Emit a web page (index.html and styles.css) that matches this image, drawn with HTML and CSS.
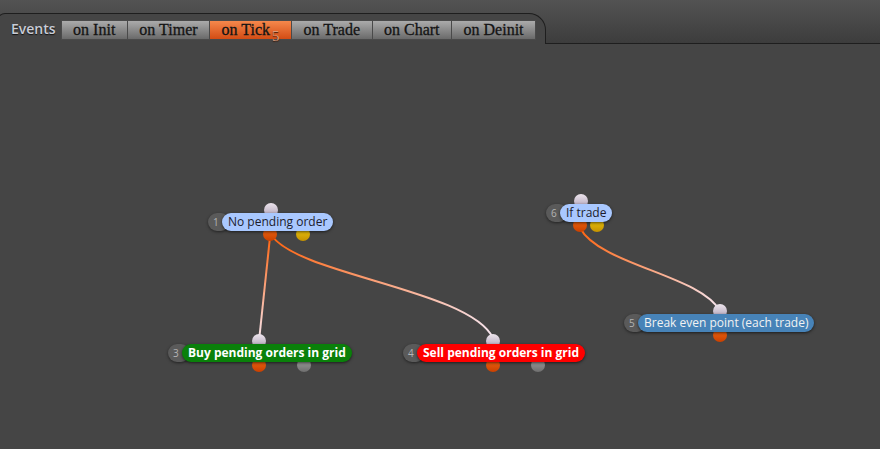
FILE: index.html
```html
<!DOCTYPE html>
<html lang="en">
<head>
    <meta charset="UTF-8">
    <title>Events</title>
    <link rel="stylesheet" href="styles.css">
</head>
<body>

    <div class="header">
        <div class="tabstrip">
            <span class="eventsLabel">Events</span>
            <span class="tab">on Init</span>
            <span class="tab">on Timer</span>
            <span class="tab activeTab">on Tick<sub class="count">5</sub></span>
            <span class="tab">on Trade</span>
            <span class="tab">on Chart</span>
            <span class="tab">on Deinit</span>
        </div>
        <div class="filler"></div>
    </div>

    <div class="canvas">
        <svg class="wires" width="880" height="405">
            <defs>
                <linearGradient id="w1" gradientUnits="userSpaceOnUse" x1="270" y1="193" x2="259" y2="297">
                    <stop offset="0" stop-color="#ff6410"/>
                    <stop offset="1" stop-color="#f6e6f0"/>
                </linearGradient>
                <linearGradient id="w2" gradientUnits="userSpaceOnUse" x1="272" y1="192" x2="493" y2="294">
                    <stop offset="0" stop-color="#ff6410"/>
                    <stop offset="1" stop-color="#f6e6f0"/>
                </linearGradient>
                <linearGradient id="w3" gradientUnits="userSpaceOnUse" x1="580" y1="184" x2="720" y2="267">
                    <stop offset="0" stop-color="#ff6410"/>
                    <stop offset="1" stop-color="#f6e6f0"/>
                </linearGradient>
            </defs>
            <path d="M270 193 L259 297" stroke="url(#w1)" stroke-width="2" fill="none"/>
            <path d="M272 192 C 300 231, 470 246, 493 294" stroke="url(#w2)" stroke-width="2" fill="none"/>
            <path d="M580 184 C 600 221, 700 231, 720 267" stroke="url(#w3)" stroke-width="2" fill="none"/>
        </svg>

        <div class="node" style="left:208px;top:169px">
            <span class="pin pinIn" style="left:56px"></span>
            <span class="pin pinOut" style="left:55px"></span>
            <span class="pin pinYes" style="left:88px"></span>
            <span class="num">1</span>
            <span class="label lightBlue">No pending order</span>
        </div>

        <div class="node" style="left:546px;top:160px">
            <span class="pin pinIn" style="left:28px"></span>
            <span class="pin pinOut" style="left:27px"></span>
            <span class="pin pinYes" style="left:44px"></span>
            <span class="num">6</span>
            <span class="label lightBlue">If trade</span>
        </div>

        <div class="node" style="left:168px;top:300px">
            <span class="pin pinIn" style="left:84px"></span>
            <span class="pin pinOut" style="left:84px"></span>
            <span class="pin pinOff" style="left:129px"></span>
            <span class="num">3</span>
            <span class="label green">Buy pending orders in grid</span>
        </div>

        <div class="node" style="left:403px;top:300px">
            <span class="pin pinIn" style="left:83px"></span>
            <span class="pin pinOut" style="left:83px"></span>
            <span class="pin pinOff" style="left:128px"></span>
            <span class="num">4</span>
            <span class="label red">Sell pending orders in grid</span>
        </div>

        <div class="node" style="left:624px;top:270px">
            <span class="pin pinIn" style="left:89px"></span>
            <span class="pin pinOut" style="left:89px"></span>
            <span class="num">5</span>
            <span class="label steel">Break even point (each trade)</span>
        </div>
    </div>

</body>
</html>
```

FILE: styles.css
```css
body {
    margin: 0;
    width: 880px;
    height: 449px;
    overflow: hidden;
    background-color: #454545;
    font-family: "Open Sans", sans-serif;
}

/* top bar with the event tabs */
.header {
    display: flex;
    height: 44px;
    background: linear-gradient(#535353, #3c3c3c);
}

.tabstrip {
    display: flex;
    align-items: flex-start;
    box-sizing: border-box;
    width: 549px;
    margin-top: 13px;
    margin-left: -3px;
    padding: 6px 0 0 13px;
    background-color: #454545;
    border: 1px solid #1e1e1e;
    border-bottom: none;
    border-radius: 8px 17px 0 0;
}

.filler {
    flex: 1;
    border-bottom: 1px solid #1e1e1e;
}

.eventsLabel {
    color: #c9ccd6;
    font-size: 14px;
    font-weight: 600;
    line-height: 18px;
    margin-right: 6px;
    text-shadow: 0 1px 1px #111;
}

.tab {
    height: 18px;
    line-height: 18px;
    padding: 0 11.5px;
    margin-left: -1px;
    font-family: "Liberation Serif", serif;
    font-size: 16px;
    color: #141414;
    -webkit-text-stroke: 0.3px #141414;
    background: linear-gradient(#ababab, #6a6a6a);
    border: 1px solid #4a4a4a;
    white-space: nowrap;
}

.activeTab {
    background: linear-gradient(#f5884c, #d34c14);
}

.count {
    font-size: 15px;
    color: #dc9a78;
    -webkit-text-stroke: 0;
    vertical-align: -6px;
    line-height: 0;
    margin-left: 2px;
    text-shadow: 0 1px 1px #3a1a0a;
}

/* node canvas */
.canvas {
    position: relative;
    height: 405px;
}

.wires {
    position: absolute;
    left: 0;
    top: 0;
}

.node {
    position: absolute;
    display: flex;
    align-items: center;
    height: 18px;
}

.num {
    position: relative;
    z-index: 1;
    box-sizing: border-box;
    width: 22px;
    height: 18px;
    margin-right: -8px;
    padding-left: 5px;
    border-radius: 9px;
    background-color: #5a5a5a;
    color: #b4b4b4;
    font-size: 10px;
    line-height: 18px;
    box-shadow: 0 1px 3px rgba(0, 0, 0, 0.5);
}

.label {
    position: relative;
    z-index: 1;
    height: 18px;
    line-height: 18px;
    padding: 0 6px;
    border-radius: 9px;
    font-size: 12px;
    white-space: nowrap;
    box-shadow: 0 1px 3px rgba(0, 0, 0, 0.6);
}

.lightBlue {
    background-color: #a9c8ff;
    color: #1c1c2c;
}

.green {
    background-color: #0a800a;
    color: #ffffff;
    font-weight: bold;
}

.red {
    background-color: #ff0000;
    color: #ffffff;
    font-weight: bold;
}

.steel {
    background-color: #4783b8;
    color: #f2f2f2;
}

.pin {
    position: absolute;
    width: 14px;
    height: 14px;
    border-radius: 50%;
    z-index: 0;
}

.pinIn {
    top: -10px;
    background: linear-gradient(#ece4ec, #b0a2b8);
}

.pinOut {
    top: 14px;
    background: linear-gradient(#f56a14, #c94000);
}

.pinYes {
    top: 14px;
    background: linear-gradient(#f2cc10, #c49200);
}

.pinOff {
    top: 14px;
    background: linear-gradient(#a6a6a6, #6e6e6e);
}
```
